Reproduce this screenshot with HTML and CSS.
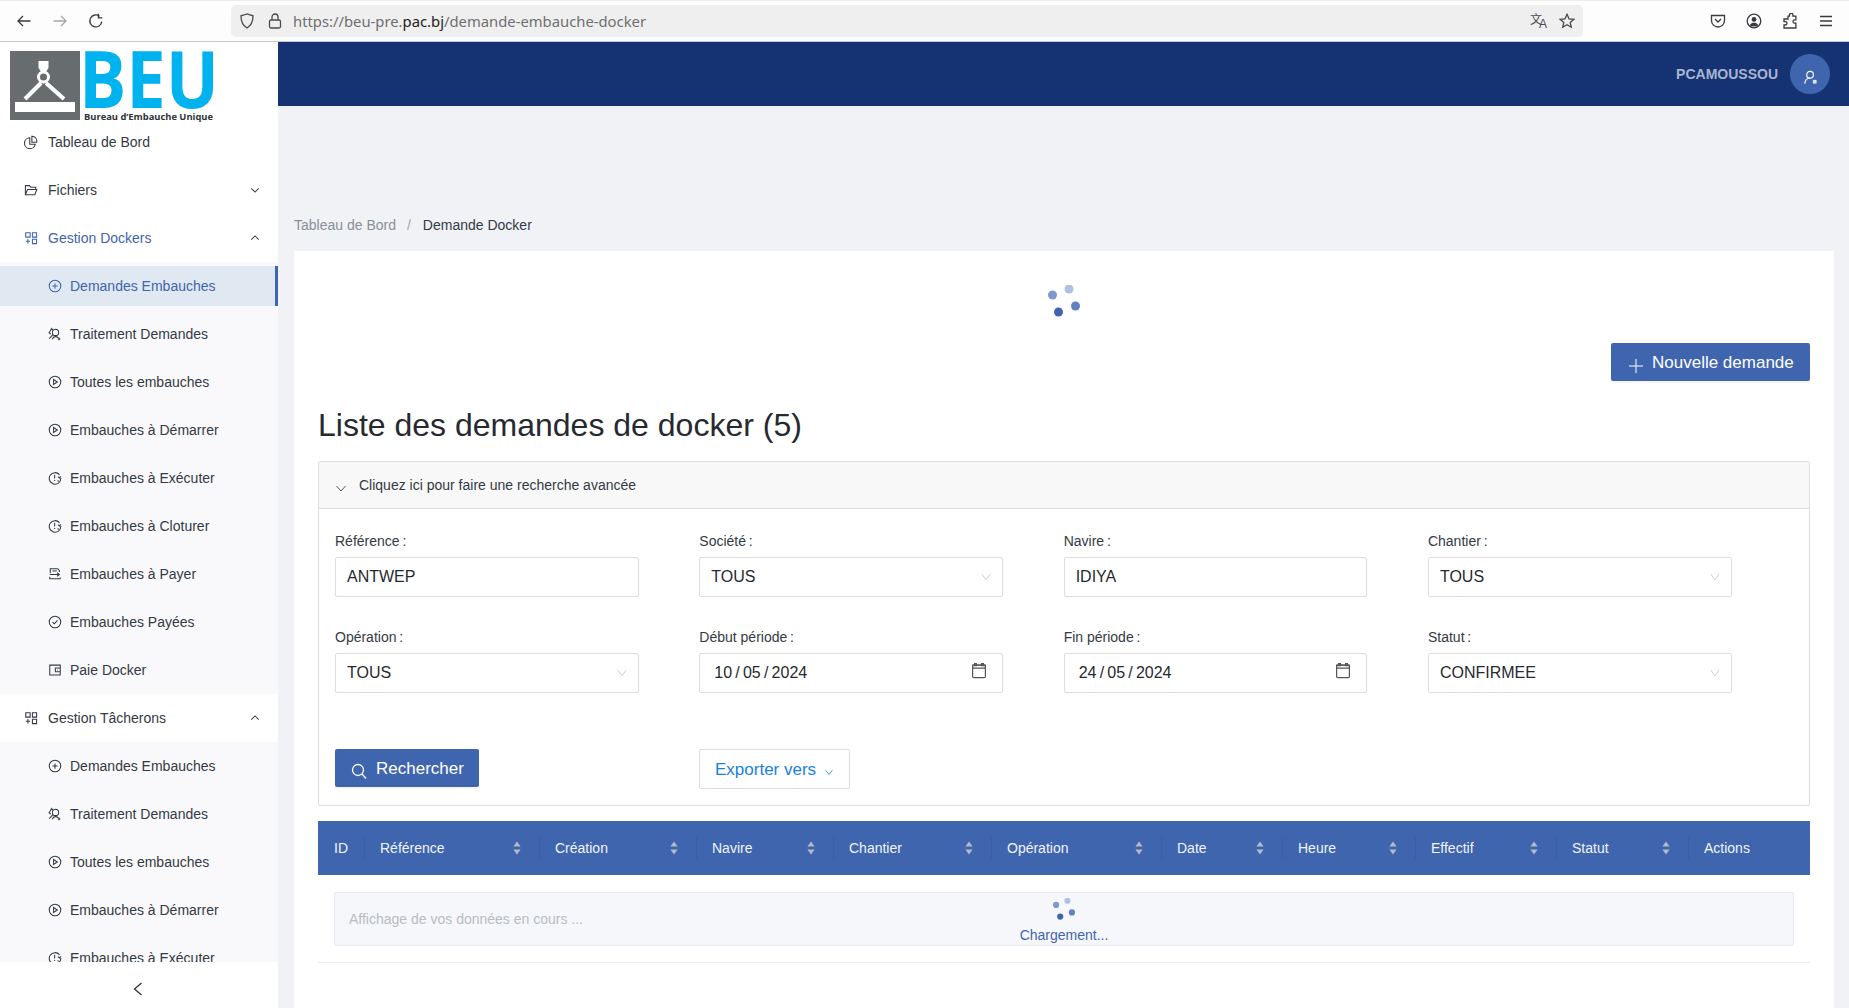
FILE: index.html
```html
<!DOCTYPE html>
<html lang="fr">
<head>
<meta charset="utf-8">
<title>Demande Docker</title>
<link rel="stylesheet" href="styles.css">
</head>
<body>
<svg class="defs" width="0" height="0" aria-hidden="true">
  <defs>
    <symbol id="i-plus-c" viewBox="0 0 16 16"><circle cx="8" cy="8" r="6.6"/><path d="M8 5v6M5 8h6"/></symbol>
    <symbol id="i-play" viewBox="0 0 16 16"><circle cx="8" cy="8" r="6.6"/><path d="M6.4 5.2 10.6 8l-4.2 2.8z"/></symbol>
    <symbol id="i-clock" viewBox="0 0 16 16"><path d="M13.2 4.4A6.6 6.6 0 1 0 14.6 8"/><path d="M7.6 4.4v4.2M11.2 6.4l2 1.6 1.6-2M7.6 10.4v1"/><path d="M11 10.8l1.4 1"/></symbol>
    <symbol id="i-users" viewBox="0 0 16 16"><circle cx="8.6" cy="6.2" r="3.6"/><path d="M1.4 13.4 5.6 8.8M5.6 3.4 4.2 1.6 1.2 6.6l2 1.6M5 14c.6-2 2-3 3.6-3 1.4 0 2.2.5 3 1.4M12.6 12v3M11.2 13.6h3"/></symbol>
    <symbol id="i-pay" viewBox="0 0 16 16"><path d="M2.6 7V2h8.4l2 2v1.600M2 8.600h11M10.400 6.600l2.600 2-2.600 2M2 11v2.400h12V12M5 4.600h5"/></symbol>
    <symbol id="i-check" viewBox="0 0 16 16"><circle cx="8" cy="8" r="6.6"/><path d="M5.2 8.2 7.2 10l3.6-3.8"/></symbol>
    <symbol id="i-wallet" viewBox="0 0 16 16"><path d="M2 2.400h12v11.200H2zM14 5.800H8.400v4.200H14M10.600 8h.8"/></symbol>
    <symbol id="i-pie" viewBox="0 0 16 16"><path d="M6.600 3.200a6.200 6.200 0 1 0 6.200 7.400H6.600z"/><path d="M9 1.400a5.600 5.600 0 0 1 5.600 6.800H9z"/></symbol>
    <symbol id="i-folder" viewBox="0 0 16 16"><path d="M1.600 13.400V3h4.600l1.600 1.800h5.600v2.600M1.600 13.400h10.800l2.200-6H4z"/></symbol>
    <symbol id="i-apps" viewBox="0 0 16 16"><path d="M2 2h5v5H2zM9.600 2h4.800v5H9.600zM9.600 9.400h4.800v5H9.600zM2 11.800h5M4.500 9.200v5"/></symbol>
    <symbol id="i-down" viewBox="0 0 12 12"><path d="M1.500 4 6 8.500 10.500 4"/></symbol>
    <symbol id="i-up" viewBox="0 0 12 12"><path d="M1.500 8 6 3.500 10.500 8"/></symbol>
    <symbol id="i-cal" viewBox="0 0 16 16"><path class="solid" d="M1.600 2.200h12.800v3H1.600zM3.600.6h1.800v2H3.600zM10.600.6h1.800v2h-1.800z"/><rect x="1.600" y="2.200" width="12.800" height="12.400" rx="1.200"/></symbol>
    <symbol id="i-sort" viewBox="0 0 8 16"><path d="M4 1.500 7.600 6.600H.4zM4 14.500.4 9.400h7.200z"/></symbol>
    <symbol id="i-spin" viewBox="0 0 32 32"><circle cx="4.500" cy="10" r="4.500" fill="#7f99cc"/><circle cx="21" cy="4" r="4.500" fill="#afc0e2"/><circle cx="27.500" cy="21" r="4.500" fill="#5f81c0"/><circle cx="10.500" cy="27" r="4.500" fill="#3f65ae"/></symbol>
  </defs>
</svg>

<header class="toolbar">
  <div class="nav-btns">
    <span class="tbtn"><svg class="tb-ic" viewBox="0 0 16 16"><path d="M14.500 8H2M7 3 2 8l5 5"/></svg></span>
    <span class="tbtn off"><svg class="tb-ic" viewBox="0 0 16 16"><path d="M1.500 8H14M9 3l5 5-5 5"/></svg></span>
    <span class="tbtn"><svg class="tb-ic" viewBox="0 0 16 16"><path d="M13.800 8.600A6 6 0 1 1 11.600 3.200M10.400 0.800v4h3.900"/></svg></span>
  </div>
  <div class="urlbar">
    <svg class="url-ic" viewBox="0 0 16 16"><path d="M8 1 2 2.800c0 5.600 1.400 9.600 6 12.200 4.600-2.600 6-6.600 6-12.200z"/></svg>
    <svg class="url-ic" viewBox="0 0 16 16"><rect x="2.500" y="7" width="11" height="8" rx="1.500"/><path d="M5 7V4a3 3 0 0 1 6 0v3"/></svg>
    <span class="url-text">https://beu-pre.<b>pac.bj</b>/demande-embauche-docker</span>
    <span class="url-end">
      <span class="translate" lang="zh"><span class="tr-a">文</span><span class="tr-b">A</span></span>
      <svg class="url-ic star" viewBox="0 0 16 16"><path d="m8 1.300 2 4.500 4.900.5-3.700 3.200 1.100 4.800L8 11.800l-4.300 2.500 1.100-4.800L1.100 6.300 6 5.800z"/></svg>
    </span>
  </div>
  <div class="tb-actions">
    <span class="tbtn"><svg class="tb-ic" viewBox="0 0 16 16"><path d="M1.500 2.500h13v5a6.500 6.500 0 0 1-13 0zM5 6l3 3 3-3"/></svg></span>
    <span class="tbtn"><svg class="tb-ic" viewBox="0 0 16 16"><circle cx="8" cy="8" r="6.800"/><circle class="solid" cx="8" cy="6.400" r="2.400"/><path class="solid" d="M3.800 12.200c1-1.800 2.400-2.400 4.200-2.400s3.200.6 4.200 2.400C11 13.800 5 13.800 3.800 12.200z"/></svg></span>
    <span class="tbtn"><svg class="tb-ic" viewBox="0 0 16 16"><path d="M6 3.200h1.500V2a1.700 1.700 0 0 1 3.400 0v1.200h3v3.600h-1.200a1.700 1.700 0 0 0 0 3.400h1.200V15H2v-3h1.300a1.700 1.700 0 0 0 0-3.400H2V6h4z"/></svg></span>
    <span class="tbtn"><svg class="tb-ic" viewBox="0 0 16 16"><path d="M2 3.500h12M2 8h12M2 12.500h12"/></svg></span>
  </div>
</header>

<div class="app">
  <aside class="sidebar">
    <div class="logo">
      <svg class="logo-svg" viewBox="0 0 204 72" role="img" aria-label="BEU">
        <rect x="0" y="1" width="70" height="69" fill="#676c6e"/>
        <path d="M28.500 11h10v7l-2 3h-6l-2-3z" fill="#fff"/>
        <circle cx="33.500" cy="27" r="5" fill="none" stroke="#fff" stroke-width="3"/>
        <path d="M31 33 15 49M36 33l18 16" stroke="#fff" stroke-width="4" fill="none"/>
        <rect x="5" y="52" width="60" height="10" fill="#fff"/>
        <text class="logo-big" x="69" y="58" textLength="140" lengthAdjust="spacingAndGlyphs">BEU</text>
        <text class="logo-small" x="74" y="70" textLength="129" lengthAdjust="spacingAndGlyphs">Bureau d’Embauche Unique</text>
      </svg>
    </div>
    <nav class="menu">
      <a class="item"><svg class="ic"><use href="#i-pie"/></svg><span>Tableau de Bord</span></a>
      <a class="item"><svg class="ic"><use href="#i-folder"/></svg><span>Fichiers</span><svg class="chev"><use href="#i-down"/></svg></a>
      <a class="item active-parent"><svg class="ic"><use href="#i-apps"/></svg><span>Gestion Dockers</span><svg class="chev dark"><use href="#i-up"/></svg></a>
      <div class="sub">
        <a class="subitem current"><span class="subrow"><svg class="ic"><use href="#i-plus-c"/></svg><span>Demandes Embauches</span></span></a>
        <a class="subitem"><span class="subrow"><svg class="ic"><use href="#i-users"/></svg><span>Traitement Demandes</span></span></a>
        <a class="subitem"><span class="subrow"><svg class="ic"><use href="#i-play"/></svg><span>Toutes les embauches</span></span></a>
        <a class="subitem"><span class="subrow"><svg class="ic"><use href="#i-play"/></svg><span>Embauches à Démarrer</span></span></a>
        <a class="subitem"><span class="subrow"><svg class="ic"><use href="#i-clock"/></svg><span>Embauches à Exécuter</span></span></a>
        <a class="subitem"><span class="subrow"><svg class="ic"><use href="#i-clock"/></svg><span>Embauches à Cloturer</span></span></a>
        <a class="subitem"><span class="subrow"><svg class="ic"><use href="#i-pay"/></svg><span>Embauches à Payer</span></span></a>
        <a class="subitem"><span class="subrow"><svg class="ic"><use href="#i-check"/></svg><span>Embauches Payées</span></span></a>
        <a class="subitem"><span class="subrow"><svg class="ic"><use href="#i-wallet"/></svg><span>Paie Docker</span></span></a>
      </div>
      <a class="item"><svg class="ic"><use href="#i-apps"/></svg><span>Gestion Tâcherons</span><svg class="chev"><use href="#i-up"/></svg></a>
      <div class="sub">
        <a class="subitem"><span class="subrow"><svg class="ic"><use href="#i-plus-c"/></svg><span>Demandes Embauches</span></span></a>
        <a class="subitem"><span class="subrow"><svg class="ic"><use href="#i-users"/></svg><span>Traitement Demandes</span></span></a>
        <a class="subitem"><span class="subrow"><svg class="ic"><use href="#i-play"/></svg><span>Toutes les embauches</span></span></a>
        <a class="subitem"><span class="subrow"><svg class="ic"><use href="#i-play"/></svg><span>Embauches à Démarrer</span></span></a>
        <a class="subitem"><span class="subrow"><svg class="ic"><use href="#i-clock"/></svg><span>Embauches à Exécuter</span></span></a>
      </div>
    </nav>
    <div class="collapse"><svg class="collapse-ic" viewBox="0 0 12 16"><path d="M9.500 2 2.500 8l7 6"/></svg></div>
  </aside>

  <div class="main">
    <div class="topbar">
      <span class="username">PCAMOUSSOU</span>
      <span class="avatar"><svg class="avatar-ic" viewBox="0 0 16 16"><circle cx="7.500" cy="5" r="3.600"/><path d="M1.800 14.500c.5-3.500 2.500-6 5.700-6"/><path class="solid" d="M10.500 10.500h4v4h-4z"/></svg></span>
    </div>
    <div class="breadcrumb"><span class="crumb-link">Tableau de Bord</span><span class="crumb-sep">/</span><span class="crumb-cur">Demande Docker</span></div>
    <section class="card">
      <div class="spin-top"><svg class="spin-big"><use href="#i-spin"/></svg></div>
      <div class="actions">
        <button class="btn btn-primary btn-new"><svg class="plus" viewBox="0 0 14 14"><path d="M7 0v14M0 7h14"/></svg>Nouvelle demande</button>
      </div>
      <h1 class="title">Liste des demandes de docker (5)</h1>

      <div class="panel">
        <div class="panel-head"><svg class="panel-chev" viewBox="0 0 12 12"><path d="M1.500 4 6 9l4.500-5"/></svg><span>Cliquez ici pour faire une recherche avancée</span></div>
        <div class="panel-body">
          <div class="form-grid">
            <div class="field"><label class="flabel">Référence&#8201;:</label><div class="control"><input class="cinput" value="ANTWEP"></div></div>
            <div class="field"><label class="flabel">Société&#8201;:</label><div class="control"><span class="cval">TOUS</span><svg class="sel-ic" viewBox="0 0 12 12"><path d="M1 2.500 6 9.500l5-7"/></svg></div></div>
            <div class="field"><label class="flabel">Navire&#8201;:</label><div class="control"><input class="cinput" value="IDIYA"></div></div>
            <div class="field"><label class="flabel">Chantier&#8201;:</label><div class="control"><span class="cval">TOUS</span><svg class="sel-ic" viewBox="0 0 12 12"><path d="M1 2.500 6 9.500l5-7"/></svg></div></div>
            <div class="field"><label class="flabel">Opération&#8201;:</label><div class="control"><span class="cval">TOUS</span><svg class="sel-ic" viewBox="0 0 12 12"><path d="M1 2.500 6 9.500l5-7"/></svg></div></div>
            <div class="field"><label class="flabel">Début période&#8201;:</label><div class="control date"><span class="cval">10&#8201;/&#8201;05&#8201;/&#8201;2024</span><svg class="cal-ic"><use href="#i-cal"/></svg></div></div>
            <div class="field"><label class="flabel">Fin période&#8201;:</label><div class="control date"><span class="cval">24&#8201;/&#8201;05&#8201;/&#8201;2024</span><svg class="cal-ic"><use href="#i-cal"/></svg></div></div>
            <div class="field"><label class="flabel">Statut&#8201;:</label><div class="control"><span class="cval">CONFIRMEE</span><svg class="sel-ic" viewBox="0 0 12 12"><path d="M1 2.500 6 9.500l5-7"/></svg></div></div>
          </div>
          <div class="form-btns">
            <button class="btn btn-primary btn-search"><svg class="search" viewBox="0 0 16 16"><circle cx="7" cy="7" r="5.500"/><path d="m11 11 4 4.500"/></svg>Rechercher</button>
            <button class="btn btn-export">Exporter vers<svg class="exp-chev" viewBox="0 0 12 12"><path d="M2 4l4 5 4-5"/></svg></button>
          </div>
        </div>
      </div>

      <table class="tbl">
        <colgroup>
          <col class="c-id"><col class="c-ref"><col class="c-cre"><col class="c-nav"><col class="c-cha"><col class="c-op"><col class="c-date"><col class="c-heu"><col class="c-eff"><col class="c-sta"><col class="c-act">
        </colgroup>
        <thead>
          <tr>
            <th>ID</th>
            <th><div class="th-in"><span>Référence</span><svg class="sort"><use href="#i-sort"/></svg></div></th>
            <th><div class="th-in"><span>Création</span><svg class="sort"><use href="#i-sort"/></svg></div></th>
            <th><div class="th-in"><span>Navire</span><svg class="sort"><use href="#i-sort"/></svg></div></th>
            <th><div class="th-in"><span>Chantier</span><svg class="sort"><use href="#i-sort"/></svg></div></th>
            <th><div class="th-in"><span>Opération</span><svg class="sort"><use href="#i-sort"/></svg></div></th>
            <th><div class="th-in"><span>Date</span><svg class="sort"><use href="#i-sort"/></svg></div></th>
            <th><div class="th-in"><span>Heure</span><svg class="sort"><use href="#i-sort"/></svg></div></th>
            <th><div class="th-in"><span>Effectif</span><svg class="sort"><use href="#i-sort"/></svg></div></th>
            <th><div class="th-in"><span>Statut</span><svg class="sort"><use href="#i-sort"/></svg></div></th>
            <th>Actions</th>
          </tr>
        </thead>
        <tbody>
          <tr>
            <td colspan="11" class="msg-cell">
              <div class="msg">
                <span class="msg-text">Affichage de vos données en cours ...</span>
                <div class="loader"><svg class="spin-small"><use href="#i-spin"/></svg><span class="loader-text">Chargement...</span></div>
              </div>
            </td>
          </tr>
        </tbody>
      </table>
    </section>
  </div>
</div>
</body>
</html>
```

FILE: styles.css
```css
* { box-sizing: border-box; }
html, body { margin: 0; height: 100%; }
body {
  display: flex;
  flex-direction: column;
  height: 1008px;
  overflow: hidden;
  font-family: "Liberation Sans", Arial, sans-serif;
  font-size: 14px;
  color: #333a45;
  background: #f0f2f6;
}
.defs { position: absolute; }

/* Browser chrome */
.toolbar {
  flex: 0 0 42px;
  display: flex;
  align-items: center;
  padding: 0 5px 0 6px;
  background: #fdfdfd;
  border-top: 1px solid #ececec;
  border-bottom: 1px solid #c8c8c8;
}
.nav-btns, .tb-actions { display: flex; }
.tbtn { width: 36px; height: 32px; display: flex; align-items: center; justify-content: center; color: #3b3b3f; }
.tbtn.off { color: #a5a5a9; }
.tb-ic { width: 16px; height: 16px; fill: none; stroke: currentColor; stroke-width: 1.3; }
.tb-ic .solid { fill: currentColor; stroke: none; }
.urlbar {
  width: 1352px;
  height: 32px;
  margin: 0 117px;
  padding: 0 7px 0 7px;
  display: flex;
  align-items: center;
  background: #efefef;
  border-radius: 5px;
}
.url-ic { width: 18px; height: 18px; padding: 1px; fill: none; stroke: #4a4a4e; stroke-width: 1.3; }
.url-ic + .url-ic { margin-left: 10px; }
.url-text { margin-left: 9px; font-family: "Noto Sans", sans-serif; font-size: 14.8px; color: #6f6f72; white-space: nowrap; }
.url-text b { font-weight: 400; color: #1d1d20; }
.url-end { margin-left: auto; display: flex; align-items: center; gap: 9px; }
.translate { width: 19px; height: 18px; display: flex; align-items: flex-start; color: #4a4a4e; }
.tr-a { font-family: "Noto Sans CJK SC", sans-serif; font-size: 12px; line-height: 13px; width: 9px; flex: none; }
.tr-b { font-size: 12px; line-height: 12px; margin-top: 6px; }
.url-ic.star { margin-left: 0; }

/* Layout */
.app { flex: 1; display: flex; min-height: 0; }
.sidebar { flex: 0 0 278px; display: flex; flex-direction: column; background: #fff; }
.logo { flex: 0 0 76px; min-height: 0; padding: 8px 0 0 10px; }
.logo-svg { display: block; width: 204px; height: 72px; overflow: visible; }
.logo-big { font-family: "Open Sans", sans-serif; font-weight: 700; font-size: 78px; fill: #00b2ee; }
.logo-small { font-family: "Open Sans", sans-serif; font-weight: 700; font-size: 9px; fill: #2d3338; }

.menu { flex: 1; min-height: 0; overflow: hidden; }
.item { height: 48px; display: flex; align-items: center; padding: 0 18px 0 24px; color: #333a45; }
.ic { flex: none; width: 14px; height: 14px; margin-right: 10px; fill: none; stroke: currentColor; stroke-width: 1.2; }
.chev { margin-left: auto; width: 10px; height: 10px; fill: none; stroke: #444; stroke-width: 1.3; }
.active-parent { color: #3f65ae; }
.sub { background: #f9f9fb; }
.subitem { display: block; height: 48px; padding: 4px 0; }
.subrow { height: 40px; display: flex; align-items: center; padding-left: 48px; color: #333a45; }
.subrow .ic { margin-right: 8px; }
.current .subrow { background: #e0e8f1; color: #3f65ae; border-right: 3px solid #3f65ae; }
.collapse { flex: 0 0 46px; display: flex; align-items: center; justify-content: center; background: #fff; }
.collapse-ic { width: 12px; height: 16px; margin: 8px 2px 0 0; fill: none; stroke: #333; stroke-width: 1.3; }

.main { flex: 1; min-width: 0; display: flex; flex-direction: column; }
.topbar {
  flex: 0 0 64px;
  display: flex;
  align-items: center;
  justify-content: flex-end;
  gap: 12px;
  padding-right: 19px;
  background: #153373;
}
.username { font-weight: 700; font-size: 14px; color: #a9b5cf; }
.avatar { width: 40px; height: 40px; border-radius: 50%; background: #3f65ae; display: flex; align-items: center; justify-content: center; }
.avatar-ic { width: 15px; height: 15px; margin-top: 6px; fill: none; stroke: #fff; stroke-width: 1.2; }
.avatar-ic .solid { fill: #dfe6f3; stroke: none; }

.breadcrumb { flex: 0 0 145px; display: flex; align-items: center; line-height: 20px; padding: 109px 0 16px 16px; }
.crumb-link { color: #8a8f98; }
.crumb-sep { margin: 0 12px 0 11px; color: #a5a9b0; }
.crumb-cur { color: #333a45; }

.card { flex: 1; margin: 0 15px 0 16px; padding: 34px 24px 0; background: #fff; min-height: 0; }
.spin-top { display: flex; justify-content: center; height: 32px; }
.spin-big { width: 32px; height: 32px; }
.actions { display: flex; justify-content: flex-end; margin-top: 26px; }
.btn { font-family: inherit; font-size: 17px; border-radius: 2px; cursor: pointer; display: inline-flex; align-items: center; }
.btn-primary { height: 38px; background: #3f65ae; color: #fff; border: 0; box-shadow: 0 2px 0 rgba(0,0,0,.04); }
.btn-new { width: 199px; padding: 2px 0 0 18px; }
.plus { width: 14px; height: 14px; margin: 6px 9px 0 0; fill: none; stroke: #fff; stroke-width: 1; }
.title { margin: 25px 0 17px; font-size: 32px; line-height: 38px; font-weight: 400; color: #262a30; }

.panel { border: 1px solid #ddd; border-radius: 2px; }
.panel-head { height: 47px; padding-left: 16px; display: flex; align-items: center; background: #f8f8f8; border-bottom: 1px solid #ddd; color: #333a45; }
.panel-chev { width: 12px; height: 12px; margin: 6px 12px 0 0; fill: none; stroke: #555; stroke-width: 1; }
.panel-body { padding: 22px 16px 16px; }
.form-grid { display: grid; grid-template-columns: repeat(4, 303.6px); column-gap: 60.73px; row-gap: 30px; }
.flabel { display: block; height: 20px; line-height: 20px; margin-bottom: 6px; color: #333a45; }
.control {
  height: 40px;
  display: flex;
  align-items: center;
  padding: 0 11px;
  background: #fff;
  border: 1px solid #ddd;
  border-radius: 2px;
  font-size: 16px;
  color: #262a30;
}
.cinput { width: 100%; border: 0; padding: 0; outline: 0; font: inherit; color: inherit; background: transparent; }
.sel-ic { width: 10px; height: 10px; margin-left: auto; fill: none; stroke: #c4c4c4; stroke-width: 1; }
.control.date { padding: 0 15px 0 14px; }
.cal-ic { width: 16px; height: 16px; margin-left: auto; margin-top: -4px; fill: none; stroke: #555; stroke-width: 1.2; }
.form-btns { display: flex; align-items: flex-start; gap: 220px; margin-top: 56px; }
.btn-search { width: 144px; padding: 2px 0 0 16px; }
.search { width: 16px; height: 16px; margin: 4px 9px 0 0; fill: none; stroke: #fff; stroke-width: 1.3; }
.btn-export { height: 40px; width: 151px; padding: 1px 0 0 15px; background: #fff; color: #1781e3; border: 1px solid #ddd; }
.exp-chev { width: 10px; height: 10px; margin: 4px 0 0 8px; fill: none; stroke: #1781e3; stroke-width: 1; }

.tbl { width: 100%; margin-top: 15px; border-collapse: collapse; table-layout: fixed; }
.c-id { width: 46px; } .c-ref { width: 175px; } .c-cre { width: 157px; } .c-nav { width: 137px; }
.c-cha { width: 158px; } .c-op { width: 170px; } .c-date { width: 121px; } .c-heu { width: 133px; }
.c-eff { width: 141px; } .c-sta { width: 132px; } .c-act { width: 122px; }
.tbl th {
  position: relative;
  height: 54px;
  padding: 0 16px;
  background: #3f65ae;
  color: #f1f4fa;
  font-weight: 400;
  font-size: 14px;
  text-align: left;
}
.tbl th + th::before {
  content: "";
  position: absolute;
  left: 0;
  top: 16px;
  height: 22px;
  width: 1px;
  background: rgba(0,0,0,.06);
}
.th-in { display: flex; align-items: center; justify-content: space-between; padding-right: 2px; }
.sort { width: 8px; height: 16px; fill: #b4bac6; }
.msg-cell { padding: 17px 16px 16px; border-bottom: 1px solid #eceef2; }
.msg { position: relative; height: 54px; padding-left: 14px; display: flex; align-items: center; background: #f6f7fb; border: 1px solid #e6eaf1; border-radius: 2px; }
.msg-text { color: #b9bcc2; }
.loader { position: absolute; left: 0; right: 0; top: 5px; display: flex; flex-direction: column; align-items: center; }
.spin-small { width: 22px; height: 22px; }
.loader-text { margin-top: 7px; color: #3f65ae; line-height: 16px; }
```
